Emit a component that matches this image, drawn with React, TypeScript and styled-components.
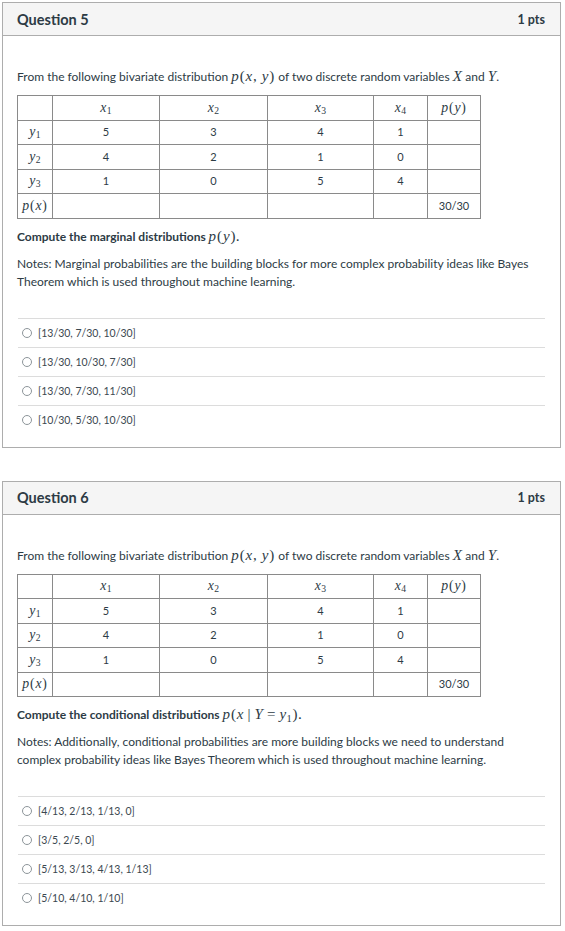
import React from "react";
import styled, { createGlobalStyle } from "styled-components";

const Global = createGlobalStyle`
  html, body { margin: 0; padding: 0; background: #ffffff; }
  body { font-family: Lato, "Noto Sans", sans-serif; color: #2d3b45; }
`;

const Page = styled.div`
  padding: 2px 4px 0 2px;
  display: flex;
  flex-direction: column;
  gap: 33px;
`;

const Card = styled.section`
  border: 1px solid #adadad;
  background: #fff;
`;

const Header = styled.header`
  height: 32px;
  background: #f5f5f5;
  border-bottom: 1px solid #adadad;
  display: flex;
  align-items: center;
  justify-content: space-between;
  padding: 0 15px 0 14px;
`;

const Title = styled.h2`
  margin: 0;
  font-size: 14.5px;
  font-weight: 700;
  color: #2d3b45;
`;

const Pts = styled.span`
  font-size: 12.5px;
  font-weight: 700;
  color: #2d3b45;
`;

const Body = styled.div`
  padding: 32px 15px 13px 14px;
  font-size: 12px;
  line-height: 18px;
`;

const P = styled.p<{ $bold?: boolean; $mt?: number }>`
  margin: ${(p) => p.$mt ?? 0}px 0 0 0;
  font-weight: ${(p) => (p.$bold ? 700 : 400)};
`;

const M = styled.span`
  font-family: "Liberation Serif", "DejaVu Serif", serif;
  font-style: italic;
  font-weight: 400;
  font-size: 1.25em;
  line-height: 1;
  white-space: nowrap;
  letter-spacing: 0.02em;
  sub {
    font-style: normal;
    font-size: 0.7em;
    vertical-align: -0.25em;
    line-height: 0;
  }
`;

const Up = styled.span`
  font-style: normal;
  margin: 0 0.04em;
`;

const Op = styled.span`
  font-style: normal;
  margin: 0 0.25em;
`;

const Table = styled.table`
  margin-top: 9px;
  border-collapse: collapse;
  font-size: 11px;
  table-layout: fixed;
  width: 463px;
  td, th {
    border: 1px solid #8a8a8a;
    height: 23.5px;
    padding: 0 2px;
    text-align: center;
    font-weight: 400;
  }
`;

const Answers = styled.ul`
  list-style: none;
  margin: 27px 0 0 1px;
  padding: 0;
`;

const Answer = styled.li`
  border-top: 1px solid #dcdcdc;
  height: 28px;
  display: flex;
  align-items: center;
  gap: 6px;
  padding-left: 4px;
  font-size: 10.5px;
  color: #3b4850;
`;

const Radio = styled.span`
  width: 10px;
  height: 10px;
  border-radius: 50%;
  border: 1px solid #8d959a;
  box-sizing: border-box;
  display: inline-block;
`;

const colWidths = [35, 107, 108, 106, 54, 53];

const DistTable = () => (
  <Table>
    <colgroup>
      {colWidths.map((w, i) => (
        <col key={i} style={{ width: w }} />
      ))}
    </colgroup>
    <thead>
      <tr>
        <th></th>
        {[1, 2, 3, 4].map((i) => (
          <th key={i}>
            <M>
              x<sub>{i}</sub>
            </M>
          </th>
        ))}
        <th>
          <M>
            p<Up>(</Up>y<Up>)</Up>
          </M>
        </th>
      </tr>
    </thead>
    <tbody>
      {[
        [5, 3, 4, 1],
        [4, 2, 1, 0],
        [1, 0, 5, 4],
      ].map((row, r) => (
        <tr key={r}>
          <td>
            <M>
              y<sub>{r + 1}</sub>
            </M>
          </td>
          {row.map((v, c) => (
            <td key={c}>{v}</td>
          ))}
          <td></td>
        </tr>
      ))}
      <tr>
        <td>
          <M>
            p<Up>(</Up>x<Up>)</Up>
          </M>
        </td>
        <td></td>
        <td></td>
        <td></td>
        <td></td>
        <td>30/30</td>
      </tr>
    </tbody>
  </Table>
);

const Intro = () => (
  <P>
    From the following bivariate distribution{" "}
    <M>
      p<Up>(</Up>x<Up>,</Up> y<Up>)</Up>
    </M>{" "}
    of two discrete random variables <M>X</M> and <M>Y</M>.
  </P>
);

type Q = {
  n: number;
  prompt: React.ReactNode;
  notes: string;
  answers: string[];
};

const questions: Q[] = [
  {
    n: 5,
    prompt: (
      <>
        Compute the marginal distributions{" "}
        <M>
          p<Up>(</Up>y<Up>)</Up>
        </M>
        .
      </>
    ),
    notes:
      "Notes: Marginal probabilities are the building blocks for more complex probability ideas like Bayes Theorem which is used throughout machine learning.",
    answers: [
      "[13/30, 7/30, 10/30]",
      "[13/30, 10/30, 7/30]",
      "[13/30, 7/30, 11/30]",
      "[10/30, 5/30, 10/30]",
    ],
  },
  {
    n: 6,
    prompt: (
      <>
        Compute the conditional distributions{" "}
        <M>
          p<Up>(</Up>x<Op>|</Op>Y<Op>=</Op>y<sub>1</sub>
          <Up>)</Up>
        </M>
        .
      </>
    ),
    notes:
      "Notes: Additionally, conditional probabilities are more building blocks we need to understand complex probability ideas like Bayes Theorem which is used throughout machine learning.",
    answers: [
      "[4/13, 2/13, 1/13, 0]",
      "[3/5, 2/5, 0]",
      "[5/13, 3/13, 4/13, 1/13]",
      "[5/10, 4/10, 1/10]",
    ],
  },
];

export default function App() {
  return (
    <>
      <Global />
      <Page>
        {questions.map((q) => (
          <Card key={q.n}>
            <Header>
              <Title>Question {q.n}</Title>
              <Pts>1 pts</Pts>
            </Header>
            <Body>
              <Intro />
              <DistTable />
              <P $bold $mt={9}>
                {q.prompt}
              </P>
              <P $mt={9}>{q.notes}</P>
              <Answers>
                {q.answers.map((a) => (
                  <Answer key={a}>
                    <Radio />
                    {a}
                  </Answer>
                ))}
              </Answers>
            </Body>
          </Card>
        ))}
      </Page>
    </>
  );
}
